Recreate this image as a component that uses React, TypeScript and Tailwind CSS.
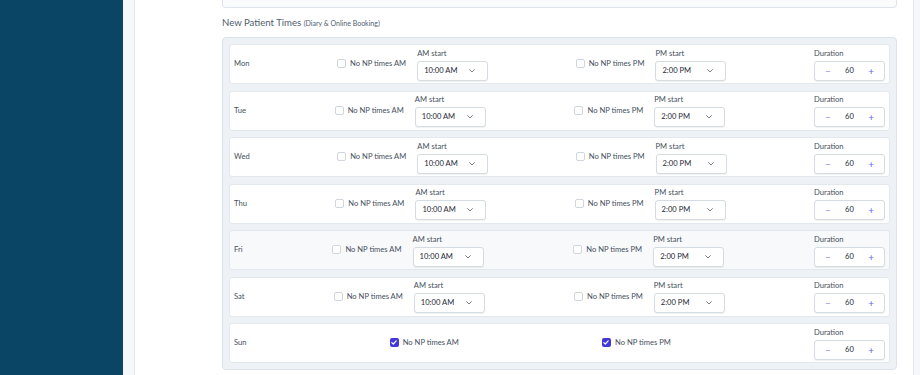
import React from 'react';

interface DayRow {
  day: string;
  noAm: boolean;
  noPm: boolean;
  highlight?: boolean;
}

const days: DayRow[] = [
  { day: 'Mon', noAm: false, noPm: false },
  { day: 'Tue', noAm: false, noPm: false },
  { day: 'Wed', noAm: false, noPm: false },
  { day: 'Thu', noAm: false, noPm: false },
  { day: 'Fri', noAm: false, noPm: false, highlight: true },
  { day: 'Sat', noAm: false, noPm: false },
  { day: 'Sun', noAm: true, noPm: true },
];

const Checkbox: React.FC<{ checked: boolean }> = ({ checked }) =>
  checked ? (
    <span className="flex h-[9px] w-[9px] items-center justify-center rounded-[2px] bg-[#4338d8]">
      <svg width="6" height="5" viewBox="0 0 6 5" fill="none">
        <polyline points="0.8,2.6 2.3,4 5.2,0.9" stroke="white" strokeWidth="1.2" strokeLinecap="round" strokeLinejoin="round" />
      </svg>
    </span>
  ) : (
    <span className="h-[9px] w-[9px] rounded-[2px] border border-[#d0d6dd] bg-white" />
  );

const CheckLabel: React.FC<{ checked: boolean; text: string }> = ({ checked, text }) => (
  <label className="flex items-center gap-[4px] text-[7.6px] text-[#46505c]">
    <Checkbox checked={checked} />
    <span>{text}</span>
  </label>
);

const Select: React.FC<{ label: string; value: string }> = ({ label, value }) => (
  <div className="flex flex-col gap-[3px]">
    <span className="text-[7.6px] leading-[10px] text-[#46505c]">{label}</span>
    <div className="flex h-[20px] w-[71px] items-center justify-between rounded-[3px] border border-[#d5dbe2] bg-white pl-[6px] pr-[12px] text-[7.6px] text-[#1f2937] shadow-[0_1px_1px_rgba(0,0,0,0.06)]">
      <span>{value}</span>
      <svg width="6" height="4" viewBox="0 0 6 4" fill="none">
        <polyline points="0.6,0.6 3,3 5.4,0.6" stroke="#6b7280" strokeWidth="0.9" strokeLinecap="round" strokeLinejoin="round" />
      </svg>
    </div>
  </div>
);

const Duration: React.FC = () => (
  <div className="flex flex-col gap-[3px]">
    <span className="text-[7.6px] leading-[10px] text-[#46505c]">Duration</span>
    <div className="flex h-[20px] w-[71px] items-center justify-between rounded-[3px] border border-[#d5dbe2] bg-white px-[10px] text-[7.6px] text-[#1f2937] shadow-[0_1px_1px_rgba(0,0,0,0.06)]">
      <span className="text-[10px] leading-none text-[#8b8ef0]">−</span>
      <span>60</span>
      <span className="text-[10px] leading-none text-[#6366f1]">+</span>
    </div>
  </div>
);

export default function App() {
  return (
    <div className="flex h-[375px] w-[920px] overflow-hidden bg-white font-['Lato',sans-serif]">
      <aside className="w-[123px] shrink-0 bg-[#0a4566]" />
      <div className="w-[12px] shrink-0 border-r border-[#e3e7ec] bg-[#f5f7fa]" />
      <main className="flex-1 pl-[87px] pr-[16px]">
        <div className="h-[8px] rounded-b-[4px] border-x border-b border-[#dfe4ea] bg-[#fafbfc]" />
        <h2 className="mt-[8px] text-[9.6px] leading-[13px] text-[#4f5e6e]">
          New Patient Times <span className="text-[7px]">(Diary &amp; Online Booking)</span>
        </h2>
        <div className="mt-[7px] flex flex-col gap-[6.5px] rounded-[4px] border border-[#dde3ea] bg-[#eef2f6] px-[6px] py-[6px]">
          {days.map((d) => (
            <div
              key={d.day}
              className={`flex h-[40px] items-center justify-between rounded-[3px] border border-[#e3e8ee] px-[4px] ${
                d.highlight ? 'bg-[#f8f9fb]' : 'bg-white'
              }`}
            >
              <span className="text-[7.6px] text-[#46505c]">{d.day}</span>
              {d.noAm ? (
                <CheckLabel checked text="No NP times AM" />
              ) : (
                <div className="flex items-center gap-[11px]">
                  <CheckLabel checked={false} text="No NP times AM" />
                  <Select label="AM start" value="10:00 AM" />
                </div>
              )}
              {d.noPm ? (
                <CheckLabel checked text="No NP times PM" />
              ) : (
                <div className="flex items-center gap-[11px]">
                  <CheckLabel checked={false} text="No NP times PM" />
                  <Select label="PM start" value="2:00 PM" />
                </div>
              )}
              <Duration />
            </div>
          ))}
        </div>
      </main>
      <div className="w-[7px] shrink-0 border-l border-[#e3e7ec] bg-[#f5f7fa]" />
    </div>
  );
}
